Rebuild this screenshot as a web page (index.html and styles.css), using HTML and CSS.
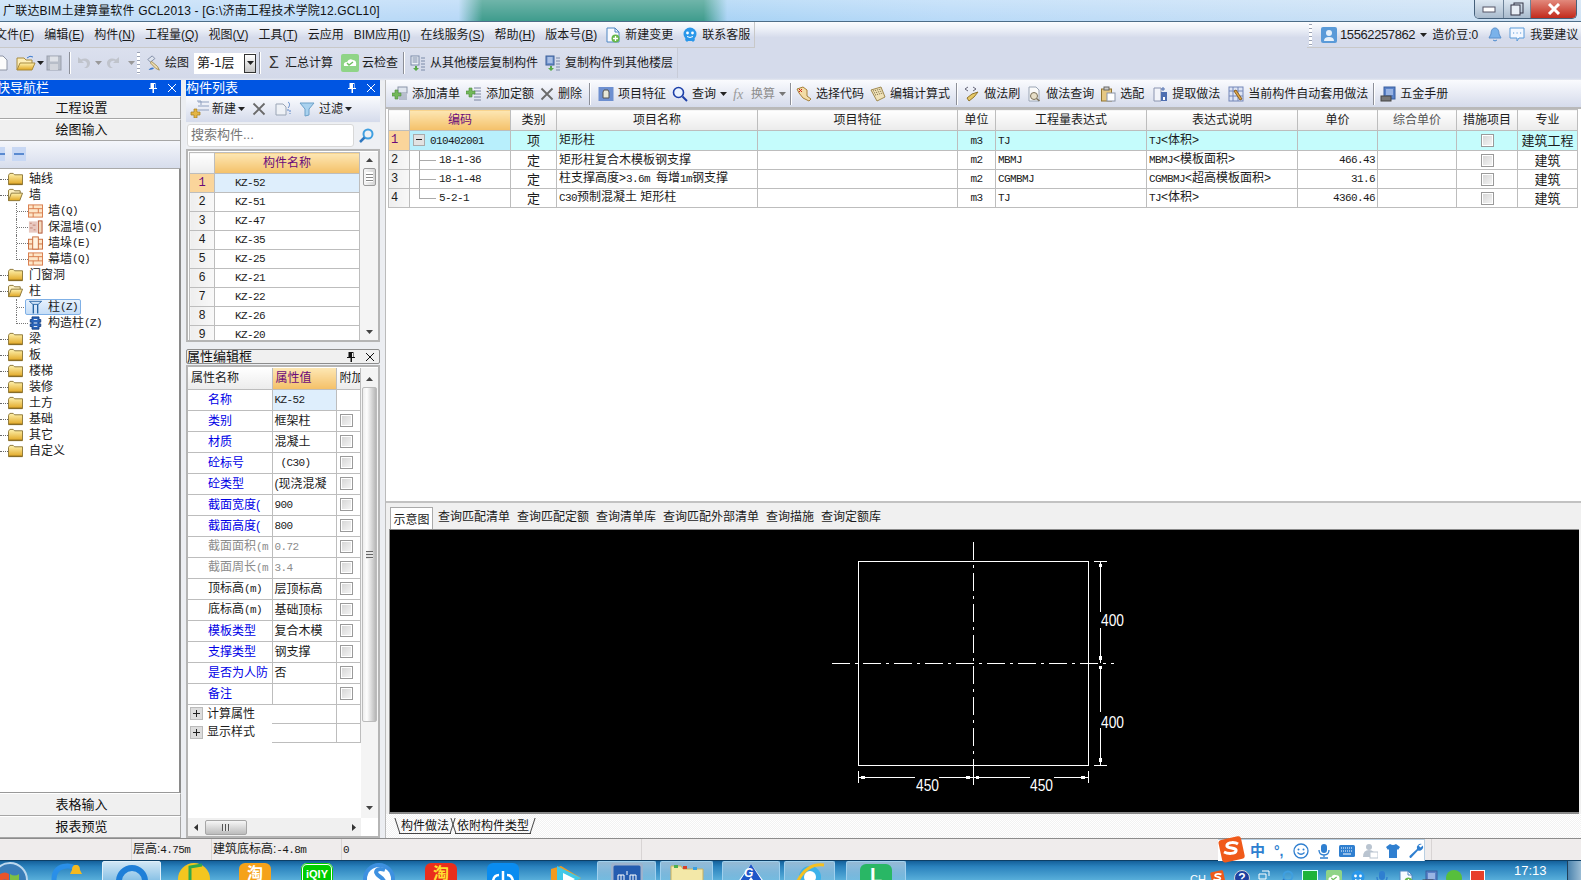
FILE: index.html
```html
<!DOCTYPE html>
<html lang="zh-CN">
<head>
<meta charset="utf-8">
<title>广联达BIM土建算量软件 GCL2013</title>
<link rel="stylesheet" href="styles.css">
</head>
<body>
<svg class="defs" aria-hidden="true">
  <defs>
    <linearGradient id="gf" x1="0" y1="0" x2="0" y2="1"><stop offset="0" stop-color="#fff3b0"/><stop offset="1" stop-color="#e0a520"/></linearGradient>
    <symbol id="folder" viewBox="0 0 16 14"><path d="M.5 3V13h15V2.500H7L5.500 1H2L.5 3z" fill="url(#gf)" stroke="#8b7434"/><path d="M1 12.500h14" stroke="#7d6220"/></symbol>
    <symbol id="folderopen" viewBox="0 0 16 14"><path d="M.5 13V2L2 1h3.500l1.500 1.500h6V5" fill="#fdf0c0" stroke="#8b7434"/><path d="M.5 13 3.500 5H15.500L12.500 13z" fill="url(#gf)" stroke="#8b7434"/></symbol>
    <symbol id="brick" viewBox="0 0 16 14"><rect x=".5" y=".5" width="15" height="13" fill="#fde6c8" stroke="#d87a4a"/><path d="M.5 4.500h15M.5 9h15M5.500.5v4M11 4.500V9M5.500 9v4.500" stroke="#d87a4a"/></symbol>
    <symbol id="insul" viewBox="0 0 16 14"><rect x="1" y="1" width="9" height="12" fill="#e8c8c0"/><path d="M2 3h2M5 5h3M2 8h3M6 10h2" stroke="#c08070"/><rect x="11" y=".5" width="4" height="13" fill="#f4dcc0" stroke="#b05030"/></symbol>
    <symbol id="pier" viewBox="0 0 16 14"><rect x=".5" y="3" width="15" height="10.500" fill="#fde6c8" stroke="#c86a3a"/><rect x="5" y=".5" width="6" height="13" fill="#fff3e0" stroke="#c86a3a"/><path d="M.5 8h4M11 8h4.500" stroke="#c86a3a"/></symbol>
    <symbol id="column" viewBox="0 0 16 16"><path d="M1 1.500h14L11 5H5z" fill="#cfe4f8" stroke="#1f5f9f"/><path d="M5.500 5v10.500M10.500 5v10.500" stroke="#1f5f9f" stroke-width="1.500"/></symbol>
    <symbol id="gzz" viewBox="0 0 16 16"><path d="M4 1h8v3h2v3h-2v2h2v3h-2v3H4v-3H2V9h2V7H2V4h2z" fill="#2a64b8" stroke="#123f80"/><path d="M6 4h4M6 8h4M6 12h4" stroke="#fff"/></symbol>
    <symbol id="pin" viewBox="0 0 10 12"><path d="M2.500 1h5v5h1.500v1H6v4H4.500V7H1V6h1.500zM6 2v4h1V2z" fill="currentColor"/></symbol>
    <symbol id="x" viewBox="0 0 12 12"><path d="M2 2l8 8M10 2l-8 8" stroke="currentColor" fill="none"/></symbol>
    <symbol id="bigx" viewBox="0 0 14 14"><path d="M1.500 1.500l11 11M12.500 1.500l-11 11" stroke="#6a6a6a" stroke-width="1.800" fill="none"/></symbol>
    <symbol id="addl" viewBox="0 0 16 16"><rect x="6" y="1" width="9" height="6" fill="#dfe5ee" stroke="#8a94a8"/><path d="M7 9h8M7 11h8M7 13h8" stroke="#8a94a8"/><path d="M3 4h3v3h3v3H6v3H3v-3H0V7h3z" fill="#72b85a" stroke="#4d8a3c" stroke-width=".6"/></symbol>
    <symbol id="addd" viewBox="0 0 16 16"><path d="M8 2h7M8 5h7M8 8h7M8 11h7M8 14h7" stroke="#7a84a0"/><path d="M3 2h3v3h3v3H6v3H3V8H0V5h3z" fill="#72b85a" stroke="#4d8a3c" stroke-width=".6"/></symbol>
    <symbol id="feat" viewBox="0 0 16 16"><rect x=".5" y="1" width="15" height="14" fill="#6d8fd0"/><path d="M6 4h4l1 2v6H5V6z" fill="#e8e8d8" stroke="#555"/></symbol>
    <symbol id="mag" viewBox="0 0 16 16"><circle cx="6.500" cy="6.500" r="5" fill="#eaf3ff" stroke="#1c3fa8" stroke-width="1.600"/><path d="M10.500 10.500 15 15" stroke="#1c3fa8" stroke-width="2"/></symbol>
    <symbol id="fx" viewBox="0 0 14 14"><text x="0" y="12" font-family="Liberation Serif" font-style="italic" font-size="14" fill="#9a9a9a">fx</text></symbol>
    <symbol id="code" viewBox="0 0 16 16"><path d="M1 3l6-2 4 3v6l4 3-2 2-6-3-4-5z" fill="#f3dca6" stroke="#a6803a"/><path d="M3 3l3 3M6 3 3 6" stroke="#d02020"/></symbol>
    <symbol id="edit" viewBox="0 0 16 16"><path d="M1 4l10-3 4 10-8 4z" fill="#efe1b8" stroke="#a08a50"/><path d="M3 5l8-2M4 7l8-2M5 9l8-2" stroke="#7a6a40" stroke-dasharray="1 1"/></symbol>
    <symbol id="brush" viewBox="0 0 16 16"><path d="M4 1 1 3l3 2M9 1l3 2-3 2" stroke="#667" fill="none"/><path d="M8 8l6-2-4 5-5 4-2-3z" fill="#e6c866" stroke="#91752d"/></symbol>
    <symbol id="query" viewBox="0 0 16 16"><path d="M3 1h7l3 3v11H3z" fill="#fafafa" stroke="#9aa5b5"/><circle cx="8" cy="10" r="3.500" fill="#e7dfc8" stroke="#7a705a"/><path d="M10.500 12.500l3 2.500" stroke="#7a705a" stroke-width="1.500"/></symbol>
    <symbol id="clip" viewBox="0 0 16 16"><rect x="1.500" y="3" width="10" height="12" fill="#e6c884" stroke="#917430"/><rect x="4" y="1" width="5" height="3" fill="#ccc" stroke="#666"/><rect x="7" y="7" width="8" height="8" fill="#fff" stroke="#8a94a8"/></symbol>
    <symbol id="take" viewBox="0 0 16 16"><path d="M2 2h7v13H2z" fill="#f2f4fa" stroke="#8a94b0"/><rect x="9" y="6" width="6" height="9" fill="#4e6eb0"/><rect x="11" y="11" width="2" height="3" fill="#fff"/><path d="M11 1v4M9 3h4" stroke="#4e6eb0"/></symbol>
    <symbol id="auto" viewBox="0 0 16 16"><rect x="1" y="1" width="14" height="14" fill="#dde4f4" stroke="#7386b8"/><path d="M1 5h14M1 10h14M5 1v14M10 1v14" stroke="#7386b8"/><path d="M6 5l6 9 2-1-6-9z" fill="#e2a848" stroke="#8a6020"/></symbol>
    <symbol id="hw" viewBox="0 0 16 16"><rect x="4" y="1" width="11" height="12" fill="#5a82c8" stroke="#395f9f"/><path d="M6 4h7M6 6h7M6 8h7" stroke="#d8e6ff"/><rect x="1" y="10" width="10" height="5" fill="#777" stroke="#444"/></symbol>
    <symbol id="doc" viewBox="0 0 14 16"><path d="M1 1h8l4 4v10H1z" fill="#f7faff" stroke="#4e86c2"/><path d="M9 1v4h4" fill="none" stroke="#4e86c2"/><circle cx="9.500" cy="11.500" r="4" fill="#66b84a"/><path d="M9.500 9v5M7 11.500h5" stroke="#fff" stroke-width="1.300"/></symbol>
    <symbol id="kf" viewBox="0 0 16 16"><circle cx="8" cy="7" r="6.500" fill="#2a97ea"/><path d="M3 13l1-2h8l1 2-2 2-1-1H6l-1 1z" fill="#2a97ea"/><circle cx="5.500" cy="6" r="1.400" fill="#fff"/><circle cx="10.500" cy="6" r="1.400" fill="#fff"/><path d="M5 9.500q3 2 6 0" stroke="#fff" fill="none"/></symbol>
    <symbol id="copy1" viewBox="0 0 16 16"><rect x="1" y="1" width="8" height="9" fill="#eef2f8" stroke="#7b8aa8"/><path d="M2.500 3h5M2.500 5h5M2.500 7h5" stroke="#7b8aa8"/><path d="M11 3h4M11 6h4M11 9h4M11 12h4M11 15h4" stroke="#7b8aa8"/><path d="M5 11h2v2h2l-3 3-3-3h2z" fill="#5aaa4a"/></symbol>
    <symbol id="copy2" viewBox="0 0 16 16"><rect x="1" y="1" width="8" height="9" fill="#6f92cc" stroke="#3c5f98"/><path d="M2.500 3h5M2.500 5h5M2.500 7h5" stroke="#e6eeff"/><path d="M11 3h4M11 6h4M11 9h4M11 12h4M11 15h4" stroke="#7b8aa8"/><path d="M5 11h2v2h2l-3 3-3-3h2z" fill="#5aaa4a"/></symbol>
    <symbol id="filter" viewBox="0 0 16 16"><path d="M1 2h14l-5 6v6l-4 1V8z" fill="#a9d2ef" stroke="#6ca0c8"/></symbol>
    <symbol id="newb" viewBox="0 0 20 18"><path d="M8 2h11M8 6h11M8 10h11" stroke="#8fa0bf"/><path d="M7 1h4v4" stroke="#8fa0bf" fill="none"/><path d="M4 9h3v3h3v3H7v3H4v-3H1v-3h3z" fill="#e4b544" stroke="#a37c1c" stroke-width=".7"/></symbol>
    <symbol id="dcopy" viewBox="0 0 16 16"><path d="M1 3h7l3 3v8H1z" fill="#eef1f6" stroke="#9aa5b5"/><path d="M13 1c2 1 2 4 0 6" stroke="#5a86c8" fill="none"/><path d="M12 9h3v4" stroke="#5a86c8" fill="none" stroke-dasharray="2 1"/></symbol>
    <symbol id="search" viewBox="0 0 16 16"><circle cx="10" cy="6" r="4.500" fill="none" stroke="#3f9fe0" stroke-width="2"/><path d="M6.500 9.500 2 14" stroke="#2f78c0" stroke-width="2.500"/></symbol>
    <symbol id="open" viewBox="0 0 20 16"><path d="M1 15V3h7l2 2h6v3" fill="#fdeeb8" stroke="#a88a3c"/><path d="M1 15 4 8h15l-3 7z" fill="url(#gf)" stroke="#a88a3c"/><path d="M11 3q3-3 6-1" stroke="#3a7ad0" fill="none"/></symbol>
    <symbol id="save" viewBox="0 0 16 16"><rect x="1" y="1" width="14" height="14" fill="#b7bdc8" stroke="#9aa0ad"/><rect x="4" y="1.500" width="8" height="5" fill="#dfe2e8"/><rect x="4" y="9" width="8" height="6" fill="#d2d5dc"/></symbol>
    <symbol id="undo" viewBox="0 0 14 14"><path d="M1 1v6h6L5 5c3-1 5 1 5 3s-1 3-3 4h3c2-1 3-3 3-5C13 3 8 1 4 3.500z" fill="#c0c4cc"/></symbol>
    <symbol id="redo" viewBox="0 0 14 14"><path d="M13 1v6H7l2-2C6 4 4 6 4 8s1 3 3 4H4c-2-1-3-3-3-5C1 3 6 1 10 3.500z" fill="#c0c4cc"/></symbol>
    <symbol id="draw" viewBox="0 0 16 18"><path d="M1 5l5-4 3 3-5 4z" fill="#dde3ee" stroke="#7a86a0"/><path d="M5 7l7 6 2 4-4-2-6-6z" fill="#f0e0b0" stroke="#a08a50"/><path d="M7 14c-3 0-4 1-5 3 3 0 5-1 6-2z" fill="#3f78c8"/></symbol>
    <symbol id="cloud" viewBox="0 0 18 18"><rect width="18" height="18" rx="2" fill="#8fd487"/><path d="M3 12q-1-4 3-4 2-4 6-2 4 0 3 6z" fill="#fff"/><path d="M6 9l2 2 4-3" stroke="#6fc060" fill="none" stroke-width="1.400"/></symbol>
    <symbol id="user" viewBox="0 0 16 16"><rect width="16" height="16" rx="2" fill="#5a9ad8"/><circle cx="8" cy="6" r="3" fill="#e6f0fa"/><path d="M3 14q0-4 5-4t5 4z" fill="#e6f0fa"/></symbol>
    <symbol id="bell" viewBox="0 0 16 16"><path d="M8 1c3 0 4 3 4 6l2 4H2l2-4c0-3 1-6 4-6z" fill="#7ab2ea" stroke="#5a90cc"/><path d="M6 13q2 2 4 0" fill="#7ab2ea" stroke="#5a90cc"/></symbol>
    <symbol id="bubble" viewBox="0 0 16 16"><path d="M1 1h14v10H10l-2 3v-3H1z" fill="#f4f8ff" stroke="#5a9ad8"/><path d="M4 6h1.200M7.500 6h1.200M11 6h1.200" stroke="#5a9ad8"/></symbol>
    <symbol id="sogou" viewBox="0 0 28 28"><rect x="2" y="2" width="23" height="23" rx="3" fill="#f05a1a" transform="rotate(-12 13 13)"/><path d="M20 8c-3-2-10-2-11 1-1 4 10 2 9 6-1 3-8 3-12 1" fill="none" stroke="#fff" stroke-width="3"/></symbol>
    <symbol id="smile" viewBox="0 0 16 16"><circle cx="8" cy="8" r="7" fill="none" stroke="#2f7fd0" stroke-width="1.300"/><circle cx="5.500" cy="6.500" r="1" fill="#2f7fd0"/><circle cx="10.500" cy="6.500" r="1" fill="#2f7fd0"/><path d="M4.500 9.500q3.500 3.500 7 0" fill="none" stroke="#2f7fd0" stroke-width="1.200"/></symbol>
    <symbol id="mic" viewBox="0 0 16 16"><rect x="5" y="1" width="6" height="9" rx="3" fill="#2f7fd0"/><path d="M3 7q0 5 5 5t5-5M8 12v2M4 15h8" stroke="#2f7fd0" fill="none" stroke-width="1.300"/></symbol>
    <symbol id="kbd" viewBox="0 0 16 16"><rect x="0" y="2" width="16" height="12" rx="1.500" fill="#2f7fd0"/><path d="M2 5h12M2 8h12" stroke="#fff" stroke-dasharray="1 1"/><path d="M4 11h8" stroke="#fff"/></symbol>
    <symbol id="person" viewBox="0 0 16 16"><circle cx="7" cy="4" r="3" fill="#b9c4d0"/><path d="M1 14q0-7 6-7t6 7z" fill="#b9c4d0"/><rect x="8" y="9" width="8" height="6" fill="#fff" stroke="#b9c4d0"/></symbol>
    <symbol id="shirt" viewBox="0 0 16 16"><path d="M5 1 1 4l2 3 1-1v9h8V6l1 1 2-3-4-3q-3 2-6 0z" fill="#2f7fd0"/></symbol>
    <symbol id="wrench" viewBox="0 0 16 16"><path d="M14 1a4 4 0 0 0-5 5L1.500 13A1.500 1.500 0 0 0 3 15l7-7.500a4 4 0 0 0 5-5l-2.500 2-2-2z" fill="#2f7fd0"/></symbol>
    <symbol id="arrd" viewBox="0 0 7 4"><path d="M0 0h7L3.500 4z" fill="currentColor"/></symbol>
    <symbol id="arru" viewBox="0 0 7 4"><path d="M0 4h7L3.500 0z" fill="currentColor"/></symbol>
    <symbol id="arrl" viewBox="0 0 4 7"><path d="M4 0v7L0 3.500z" fill="currentColor"/></symbol>
    <symbol id="arrr" viewBox="0 0 4 7"><path d="M0 0v7l4-3.500z" fill="currentColor"/></symbol>
  </defs>
</svg>

<header class="titlebar">
  <span class="title">广联达BIM土建算量软件 GCL2013 - [G:\济南工程技术学院12.GCL10]</span>
  <div class="winctl">
    <span class="wb"><svg width="14" height="10"><rect x="1" y="3" width="12" height="5" fill="#fff" stroke="#556"/></svg></span>
    <span class="wb wb-max"><svg width="14" height="14"><rect x="4" y="1" width="9" height="10" fill="none" stroke="#334"/><rect x="1" y="3" width="9" height="10" fill="#e8eef6" stroke="#334"/></svg></span>
    <span class="wb wb-close"><svg width="14" height="12"><path d="M2 1l10 10M12 1 2 11" stroke="#fff" stroke-width="3"/></svg></span>
  </div>
</header>

<nav class="menubar">
  <div class="menu">
    <span>文件(<u>F</u>)</span><span>编辑(<u>E</u>)</span><span>构件(<u>N</u>)</span><span>工程量(<u>Q</u>)</span><span>视图(<u>V</u>)</span><span>工具(<u>T</u>)</span><span>云应用</span><span>BIM应用(<u>I</u>)</span><span>在线服务(<u>S</u>)</span><span>帮助(<u>H</u>)</span><span>版本号(<u>B</u>)</span>
    <span class="it it-a"><svg class="i16"><use href="#doc"/></svg>新建变更</span>
    <span class="it it-b"><svg class="i16"><use href="#kf"/></svg>联系客服</span>
  </div>
  <div class="userbar">
    <span class="grip"></span>
    <svg class="i16"><use href="#user"/></svg>
    <span class="phone">15562257862</span>
    <svg class="tri"><use href="#arrd"/></svg>
    <span>造价豆:0</span>
    <svg class="i16 bell"><use href="#bell"/></svg>
    <svg class="i16"><use href="#bubble"/></svg>
    <span>我要建议</span>
  </div>
</nav>

<div class="toolbar">
  <div class="tools">
    <svg class="i16 cropdoc" viewBox="0 0 16 16"><path d="M1 1h10l4 4v10H1z" fill="#fbfbfb" stroke="#8d94a4"/></svg>
    <svg class="i20 ml8"><use href="#open"/></svg><svg class="tri ml1"><use href="#arrd"/></svg>
    <svg class="i16 ml2"><use href="#save"/></svg>
    <span class="vsep ml7"></span>
    <svg class="i14 ml6"><use href="#undo"/></svg><svg class="tri tri-off ml4"><use href="#arrd"/></svg>
    <svg class="i14 ml4"><use href="#redo"/></svg><svg class="tri tri-off ml8"><use href="#arrd"/></svg>
    <span class="grip ml2"></span>
    <svg class="i16 ml6"><use href="#draw"/></svg><span class="ml3">绘图</span>
    <span class="combo ml5"><span>第-1层</span><span class="combo-btn"><svg class="tri"><use href="#arrd"/></svg></span></span>
    <span class="vsep ml3"></span>
    <span class="sigma ml7">Σ</span><span class="ml5">汇总计算</span>
    <svg class="i18 ml8"><use href="#cloud"/></svg><span class="ml3">云检查</span>
    <span class="vsep ml5"></span>
    <svg class="i16 ml5"><use href="#copy1"/></svg><span class="ml4">从其他楼层复制构件</span>
    <svg class="i16 ml7"><use href="#copy2"/></svg><span class="ml4">复制构件到其他楼层</span>
  </div>
</div>

<main class="workspace">
  <aside class="nav">
    <div class="phead phead-blue nav-head"><span>快导航栏</span><svg class="pin"><use href="#pin"/></svg><svg class="px"><use href="#x"/></svg></div>
    <button class="navbtn">工程设置</button>
    <button class="navbtn navbtn-b">绘图输入</button>
    <div class="treetools"><span class="tt-btn tt-cut"></span><span class="tt-btn"></span></div>
    <div class="tree">
      <div class="n"><i class="dot"></i><svg class="fi"><use href="#folder"/></svg>轴线</div>
      <div class="n"><i class="dot dot-open"></i><svg class="fi"><use href="#folderopen"/></svg>墙</div>
      <div class="n c"><i class="ln"></i><svg class="fi"><use href="#brick"/></svg>墙<span class="m">(Q)</span></div>
      <div class="n c"><i class="ln"></i><svg class="fi"><use href="#insul"/></svg>保温墙<span class="m">(Q)</span></div>
      <div class="n c"><i class="ln"></i><svg class="fi"><use href="#pier"/></svg>墙垛<span class="m">(E)</span></div>
      <div class="n c"><i class="ln ln-end"></i><svg class="fi"><use href="#brick"/></svg>幕墙<span class="m">(Q)</span></div>
      <div class="n"><i class="dot"></i><svg class="fi"><use href="#folder"/></svg>门窗洞</div>
      <div class="n"><i class="dot dot-open"></i><svg class="fi"><use href="#folderopen"/></svg>柱</div>
      <div class="n c"><i class="ln"></i><span class="sel"><svg class="fi"><use href="#column"/></svg>柱<span class="m">(Z)</span></span></div>
      <div class="n c"><i class="ln ln-end"></i><svg class="fi"><use href="#gzz"/></svg>构造柱<span class="m">(Z)</span></div>
      <div class="n"><i class="dot"></i><svg class="fi"><use href="#folder"/></svg>梁</div>
      <div class="n"><i class="dot"></i><svg class="fi"><use href="#folder"/></svg>板</div>
      <div class="n"><i class="dot"></i><svg class="fi"><use href="#folder"/></svg>楼梯</div>
      <div class="n"><i class="dot"></i><svg class="fi"><use href="#folder"/></svg>装修</div>
      <div class="n"><i class="dot"></i><svg class="fi"><use href="#folder"/></svg>土方</div>
      <div class="n"><i class="dot"></i><svg class="fi"><use href="#folder"/></svg>基础</div>
      <div class="n"><i class="dot"></i><svg class="fi"><use href="#folder"/></svg>其它</div>
      <div class="n"><i class="dot"></i><svg class="fi"><use href="#folder"/></svg>自定义</div>
    </div>
    <button class="navbtn">表格输入</button>
    <button class="navbtn navbtn-b">报表预览</button>
  </aside>

  <section class="mid">
    <div class="phead phead-blue"><span>构件列表</span><svg class="pin"><use href="#pin"/></svg><svg class="px"><use href="#x"/></svg></div>
    <div class="midtools">
      <svg class="i20"><use href="#newb"/></svg><span>新建</span><svg class="tri"><use href="#arrd"/></svg>
      <svg class="i14 gapx"><use href="#bigx"/></svg>
      <svg class="i16 gap6"><use href="#dcopy"/></svg>
      <svg class="i16 gap4"><use href="#filter"/></svg><span class="ml2">过滤</span><svg class="tri"><use href="#arrd"/></svg>
    </div>
    <div class="searchrow"><span class="searchbox">搜索构件...</span><svg class="i16 searchi"><use href="#search"/></svg></div>
    <div class="listframe">
      <table class="gl">
        <colgroup><col class="c-rn"><col class="c-nm"></colgroup>
        <tr class="hd"><th class="rn"></th><th class="act">构件名称</th></tr>
        <tr class="cur"><td class="rn act">1</td><td class="name">KZ-52</td></tr>
        <tr><td class="rn">2</td><td class="name">KZ-51</td></tr>
        <tr><td class="rn">3</td><td class="name">KZ-47</td></tr>
        <tr><td class="rn">4</td><td class="name">KZ-35</td></tr>
        <tr><td class="rn">5</td><td class="name">KZ-25</td></tr>
        <tr><td class="rn">6</td><td class="name">KZ-21</td></tr>
        <tr><td class="rn">7</td><td class="name">KZ-22</td></tr>
        <tr><td class="rn">8</td><td class="name">KZ-26</td></tr>
        <tr><td class="rn">9</td><td class="name">KZ-20</td></tr>
      </table>
      <div class="vsb"><svg class="ar"><use href="#arru"/></svg><span class="vthumb-s"></span><span class="sp"></span><svg class="ar"><use href="#arrd"/></svg></div>
    </div>
    <div class="phead phead-gray"><span>属性编辑框</span><svg class="pin"><use href="#pin"/></svg><svg class="px"><use href="#x"/></svg></div>
    <div class="propframe">
      <div class="propmain">
        <table class="pt">
          <colgroup><col class="p1"><col class="p2"><col class="p3"></colgroup>
          <tr class="phd"><th class="l">属性名称</th><th class="act l">属性值</th><th class="l clipc">附加</th></tr>
          <tr><td class="lb bl">名称</td><td class="cur-v"><span class="m">KZ-52</span></td><td></td></tr>
          <tr><td class="lb bl">类别</td><td>框架柱</td><td><i class="cb"></i></td></tr>
          <tr><td class="lb bl">材质</td><td>混凝土</td><td><i class="cb"></i></td></tr>
          <tr><td class="lb bl">砼标号</td><td><span class="m">&nbsp;(C30)</span></td><td><i class="cb"></i></td></tr>
          <tr><td class="lb bl">砼类型</td><td>(现浇混凝</td><td><i class="cb"></i></td></tr>
          <tr><td class="lb bl">截面宽度(</td><td><span class="m">900</span></td><td><i class="cb"></i></td></tr>
          <tr><td class="lb bl">截面高度(</td><td><span class="m">800</span></td><td><i class="cb"></i></td></tr>
          <tr><td class="lb gr">截面面积<span class="m">(m</span></td><td class="gr"><span class="m">0.72</span></td><td><i class="cb"></i></td></tr>
          <tr><td class="lb gr">截面周长<span class="m">(m</span></td><td class="gr"><span class="m">3.4</span></td><td><i class="cb"></i></td></tr>
          <tr><td class="lb">顶标高<span class="m">(m)</span></td><td>层顶标高</td><td><i class="cb"></i></td></tr>
          <tr><td class="lb">底标高<span class="m">(m)</span></td><td>基础顶标</td><td><i class="cb"></i></td></tr>
          <tr><td class="lb bl">模板类型</td><td>复合木模</td><td><i class="cb"></i></td></tr>
          <tr><td class="lb bl">支撑类型</td><td>钢支撑</td><td><i class="cb"></i></td></tr>
          <tr><td class="lb bl">是否为人防</td><td>否</td><td><i class="cb"></i></td></tr>
          <tr><td class="lb bl">备注</td><td></td><td><i class="cb"></i></td></tr>
          <tr class="grp"><td class="lb-g"><i class="plus"></i>计算属性</td><td></td><td></td></tr>
          <tr class="grp"><td class="lb-g"><i class="plus"></i>显示样式</td><td></td><td></td></tr>
        </table>
        <div class="vsb vsb-p"><svg class="ar"><use href="#arru"/></svg><span class="vthumb-l"><span class="grips"></span></span><span class="sp"></span><svg class="ar"><use href="#arrd"/></svg></div>
      </div>
      <div class="hsb"><svg class="ah"><use href="#arrl"/></svg><span class="hthumb"><span class="gripsh"></span></span><span class="sp"></span><svg class="ah"><use href="#arrr"/></svg></div>
    </div>
  </section>

  <section class="right">
    <div class="rtools">
      <span class="it"><svg class="i16"><use href="#addl"/></svg>添加清单</span>
      <span class="it"><svg class="i16"><use href="#addd"/></svg>添加定额</span>
      <span class="it"><svg class="i14"><use href="#bigx"/></svg>删除</span>
      <span class="vsep"></span>
      <span class="it"><svg class="i16"><use href="#feat"/></svg>项目特征</span>
      <span class="it"><svg class="i16"><use href="#mag"/></svg>查询<svg class="tri"><use href="#arrd"/></svg></span>
      <span class="it it-off"><svg class="i14"><use href="#fx"/></svg>换算<svg class="tri"><use href="#arrd"/></svg></span>
      <span class="vsep vs-b"></span>
      <span class="it"><svg class="i16"><use href="#code"/></svg>选择代码</span>
      <span class="it"><svg class="i16"><use href="#edit"/></svg>编辑计算式</span>
      <span class="vsep vs-c"></span>
      <span class="it"><svg class="i16"><use href="#brush"/></svg>做法刷</span>
      <span class="it"><svg class="i16"><use href="#query"/></svg>做法查询</span>
      <span class="it"><svg class="i16"><use href="#clip"/></svg>选配</span>
      <span class="it ml2"><svg class="i16"><use href="#take"/></svg>提取做法</span>
      <span class="it ml2"><svg class="i16"><use href="#auto"/></svg>当前构件自动套用做法</span>
      <span class="vsep vs-d"></span>
      <span class="it"><svg class="i16"><use href="#hw"/></svg>五金手册</span>
    </div>
    <div class="grid-area">
      <table class="mt">
        <colgroup><col class="m0"><col class="m1"><col class="m2"><col class="m3"><col class="m4"><col class="m5"><col class="m6"><col class="m7"><col class="m8"><col class="m9"><col class="m10"><col class="m11"></colgroup>
        <tr class="hd"><th class="rn"></th><th class="act">编码</th><th>类别</th><th>项目名称</th><th>项目特征</th><th>单位</th><th>工程量表达式</th><th>表达式说明</th><th>单价</th><th class="dim">综合单价</th><th>措施项目</th><th>专业</th></tr>
        <tr class="r1"><td class="rn act">1</td><td class="code0"><i class="minus"></i><span class="m">010402001</span></td><td class="ct big">项</td><td>矩形柱</td><td></td><td class="ct"><span class="m">m3</span></td><td><span class="m">TJ</span></td><td><span class="m">TJ</span>&lt;体积&gt;</td><td></td><td></td><td class="ct"><i class="cb"></i></td><td class="ct big">建筑工程</td></tr>
        <tr><td class="rn">2</td><td class="code tm"><span class="m">18-1-36</span></td><td class="ct big">定</td><td>矩形柱复合木模板钢支撑</td><td></td><td class="ct"><span class="m">m2</span></td><td><span class="m">MBMJ</span></td><td><span class="m">MBMJ</span>&lt;模板面积&gt;</td><td class="rt"><span class="m">466.43</span></td><td></td><td class="ct"><i class="cb"></i></td><td class="ct big">建筑</td></tr>
        <tr><td class="rn">3</td><td class="code tm"><span class="m">18-1-48</span></td><td class="ct big">定</td><td>柱支撑高度&gt;<span class="m">3.6m </span>每增<span class="m">1m</span>钢支撑</td><td></td><td class="ct"><span class="m">m2</span></td><td><span class="m">CGMBMJ</span></td><td><span class="m">CGMBMJ</span>&lt;超高模板面积&gt;</td><td class="rt"><span class="m">31.6</span></td><td></td><td class="ct"><i class="cb"></i></td><td class="ct big">建筑</td></tr>
        <tr><td class="rn">4</td><td class="code tl"><span class="m">5-2-1</span></td><td class="ct big">定</td><td><span class="m">C30</span>预制混凝土 矩形柱</td><td></td><td class="ct"><span class="m">m3</span></td><td><span class="m">TJ</span></td><td><span class="m">TJ</span>&lt;体积&gt;</td><td class="rt"><span class="m">4360.46</span></td><td></td><td class="ct"><i class="cb"></i></td><td class="ct big">建筑</td></tr>
      </table>
    </div>
    <div class="dtabs"><span class="dtab on">示意图</span><span class="dtab">查询匹配清单</span><span class="dtab">查询匹配定额</span><span class="dtab">查询清单库</span><span class="dtab">查询匹配外部清单</span><span class="dtab">查询描施</span><span class="dtab">查询定额库</span></div>
    <div class="canvas">
      <svg class="draw" width="1186" height="283" viewBox="390 530 1186 283">
        <g fill="none" stroke="#fff">
          <rect x="858.500" y="561.500" width="230" height="204"/>
          <path d="M973.500 542V790" stroke-dasharray="18 5 3 5"/>
          <path d="M832 663.500H1114" stroke-dasharray="18 5 3 5"/>
          <path d="M1094 561.500h13M1094 765.500h13M1100.500 562V612M1100.500 628V663M1100.500 667V712M1100.500 728V765"/>
          <path d="M858.500 771v12M1088.500 771v12M858 777.500H915M939 777.500H973M973 777.500H1030M1054 777.500H1088M973.500 771v12"/>
        </g>
        <g fill="#fff">
          <rect x="1099" y="564" width="3" height="3"/><rect x="1099" y="656" width="3" height="4"/><rect x="1099" y="666" width="3" height="3"/><rect x="1099" y="758" width="3" height="4"/>
          <rect x="861" y="776" width="4" height="3"/><rect x="966" y="776" width="4" height="3"/><rect x="976" y="776" width="3" height="3"/><rect x="1081" y="776" width="4" height="3"/>
        </g>
        <g class="dimt">
          <text x="1101" y="626" textLength="23" lengthAdjust="spacingAndGlyphs">400</text><text x="1101" y="728" textLength="23" lengthAdjust="spacingAndGlyphs">400</text><text x="916" y="791" textLength="23" lengthAdjust="spacingAndGlyphs">450</text><text x="1030" y="791" textLength="23" lengthAdjust="spacingAndGlyphs">450</text>
        </g>
      </svg>
    </div>
    <div class="btabs"><span class="btab">构件做法</span><span class="btab">依附构件类型</span></div>
  </section>
</main>

<footer class="status">
  <span class="st st1"></span>
  <span class="st st2">层高:<span class="m">4.75m</span></span>
  <span class="st st3">建筑底标高:<span class="m">-4.8m</span></span>
  <span class="st st4"><span class="m">0</span></span>
  <span class="st st5"></span>
  <span class="st st6"></span>
  <div class="sogou">
    <svg class="sg-logo"><use href="#sogou"/></svg>
    <span class="zh">中</span>
    <span class="pt2">°,</span>
    <svg class="i16"><use href="#smile"/></svg>
    <svg class="i16"><use href="#mic"/></svg>
    <svg class="i16"><use href="#kbd"/></svg>
    <svg class="i16"><use href="#person"/></svg>
    <svg class="i16"><use href="#shirt"/></svg>
    <svg class="i16"><use href="#wrench"/></svg>
  </div>
</footer>

<div class="taskbar">
  <span class="slot s-start"><svg width="36" height="36" viewBox="0 0 36 36"><circle cx="14" cy="18" r="17" fill="#3a7db8" stroke="#bcd8ee" stroke-width="2"/><path d="M4 12q5-3 9 0v7q-4-3-9 0z" fill="#e8542a"/><path d="M14 12q5 3 9 0v7q-4 3-9 0z" fill="#7cc043"/></svg></span>
  <span class="slot s-g"><svg width="40" height="32" viewBox="0 0 40 32"><path d="M28 6c-4-5-22-5-22 10s16 16 22 10" fill="none" stroke="#2a8fe8" stroke-width="5"/><path d="M28 2c3 0 4 2 4 5l2 4H22l2-4c0-3 1-5 4-5z" fill="#f5b91f"/></svg></span>
  <span class="slot s-act"><svg width="34" height="34" viewBox="0 0 34 34"><circle cx="17" cy="17" r="13" fill="none" stroke="#1e7fd8" stroke-width="6"/></svg></span>
  <span class="slot s-q"><svg width="32" height="32" viewBox="0 0 32 32"><circle cx="16" cy="16" r="16" fill="#f3c61f"/><path d="M12 18V4l12-2" fill="none" stroke="#2ea84f" stroke-width="3"/></svg></span>
  <span class="slot"><span class="app-sq app-or">淘</span></span>
  <span class="slot"><span class="app-sq app-gr">iQIY</span></span>
  <span class="slot"><svg width="32" height="32" viewBox="0 0 32 32"><circle cx="16" cy="16" r="16" fill="#3d90e0"/><circle cx="16" cy="16" r="12" fill="#fff"/><path d="M22 7c-8-3-12 2-6 6s8 8 0 11" fill="none" stroke="#3d90e0" stroke-width="4"/></svg></span>
  <span class="slot"><span class="app-sq app-rd">淘</span></span>
  <span class="slot"><svg width="32" height="32" viewBox="0 0 32 32"><rect width="32" height="32" rx="6" fill="#0a8cf0"/><path d="M6 18q1-6 6-6M26 18q-1-6-6-6M16 8v18" fill="none" stroke="#fff" stroke-width="2.500"/></svg></span>
  <span class="slot"><svg width="32" height="32" viewBox="0 0 32 32"><path d="M2 6l10-3 20 12-20 16H2z" fill="#f39a1f"/><path d="M8 3l24 12-24 16z" fill="#41c8e8"/><path d="M14 10l12 6-12 8z" fill="#fff"/></svg></span>
  <span class="btnb btn-b"><svg width="32" height="26" viewBox="0 0 32 26"><rect x="1" y="1" width="30" height="30" rx="3" fill="#245cb0" stroke="#9db2cc" stroke-width="3"/><path d="M7 12h6v8H7zM19 12h6v8h-6zM10 12v8M22 12v8M16 8v4" fill="none" stroke="#fff"/></svg></span>
  <span class="btnb btn-f"><svg width="34" height="24" viewBox="0 0 34 24"><path d="M1 24V3l10 0 2 3h20v18z" fill="#f3e8a8" stroke="#c9b060"/><rect x="4" y="2" width="4" height="3" fill="#4cb050"/><rect x="13" y="3" width="4" height="3" fill="#d8402a"/><rect x="23" y="4" width="4" height="3" fill="#3aa0e0"/></svg></span>
  <span class="btnb btn-g"><svg width="34" height="24" viewBox="0 0 34 24"><path d="M17 1 34 24H0z" fill="#fff"/><path d="M17 1 2 24h8l7-10 7 10h8z" fill="#1e56c8"/><text x="10" y="14" class="gtext">G</text></svg></span>
  <span class="btnb btn-e"><svg width="32" height="26" viewBox="0 0 32 26"><circle cx="16" cy="14" r="11" fill="#3db2ea"/><circle cx="16" cy="14" r="6" fill="#fff"/><path d="M3 20Q12 0 30 2" fill="none" stroke="#f5c022" stroke-width="3"/></svg></span>
  <span class="btnb btn-l"><span class="app-sq app-lg">L</span></span>
  <span class="sp"></span>
  <div class="tray">
    <span class="ch">CH</span>
    <svg class="i16"><use href="#sogou"/></svg>
    <span class="help">?</span>
    <svg class="tr-w" viewBox="0 0 12 10"><path d="M1 4h7v5H1zM4 1h7v5" fill="none" stroke="#fff"/></svg>
    <svg class="i16"><use href="#search"/></svg>
    <span class="tr-g"></span>
    <svg class="i16"><use href="#cloud"/></svg>
    <svg class="i16"><use href="#kf"/></svg>
    <svg class="i16"><use href="#mic"/></svg>
    <svg class="i16"><use href="#doc"/></svg>
    <svg class="i16"><use href="#hw"/></svg>
    <span class="tr-gr"></span>
    <span class="tr-rd"></span>
    <span class="clock">17:13</span>
    <span class="showdesk"></span>
  </div>
</div>
</body>
</html>
```

FILE: styles.css
```css
*{box-sizing:border-box}
html,body{margin:0;padding:0}
body{width:1581px;height:880px;overflow:hidden;display:grid;grid-template-rows:22px 26px 30px 760px 22px 20px;font:12px/16px "Liberation Sans","Noto Sans CJK SC",sans-serif;color:#1b1b1b;background:#d5dbeb}
.defs{position:absolute;width:0;height:0}
svg{display:block;flex:none}
.m{font-family:"Liberation Mono","Noto Sans CJK SC",monospace;font-size:11px;letter-spacing:-.6px}
.i14{width:14px;height:14px}.i16{width:16px;height:16px}.i18{width:18px;height:18px}.i20{width:20px;height:18px}
.tri{width:7px;height:4px;color:#222}
.tri-off{color:#999}
.sp{flex:1}
.ml1{margin-left:1px}.ml2{margin-left:2px}.ml3{margin-left:3px}.ml4{margin-left:4px}.ml5{margin-left:5px}.ml6{margin-left:6px}.ml7{margin-left:7px}.ml8{margin-left:8px}

/* title */
.titlebar{display:flex;align-items:center;height:22px;border-bottom:1px solid #4d6d88;background:linear-gradient(rgba(255,255,255,.25),rgba(255,255,255,0)),linear-gradient(90deg,#c5dff7 0,#b7d8f7 29%,#3f9c8d 30.500%,#3f9c8d 44.500%,#a9d3f5 46%,#b9daf8 60%,#cfe2f4 100%)}
.title{margin-left:3px;font-size:12px;letter-spacing:.2px;color:#111;line-height:20px;white-space:nowrap}
.winctl{margin-left:auto;margin-right:4px;align-self:flex-start;display:flex;height:19px;border:1px solid #45607a;border-top:0;border-radius:0 0 5px 5px;overflow:hidden}
.wb{width:29px;display:flex;align-items:center;justify-content:center;background:linear-gradient(#dde8f2,#a9bbcd);border-right:1px solid #6d8298}
.wb-max{width:27px}
.wb-close{width:45px;border:0;background:linear-gradient(#e2897c,#c22a1c)}

/* menu */
.menubar{display:flex;justify-content:space-between;height:26px;background:linear-gradient(#fbfcfe 0,#eef1f8 25%,#d5dbeb 60%)}
.menu{display:flex;align-items:center;gap:10px;margin-left:-5px;padding:1px 6px 0 0;border-right:1px solid #c8c8c8;border-bottom:1px solid #c8c8c8;white-space:nowrap;width:760px}
.menu u{text-underline-offset:1px}
.it{display:inline-flex;align-items:center;gap:4px;white-space:nowrap}
.it-a{margin-left:-2px}
.it-b{margin-left:-1px}
.userbar{display:flex;align-items:center;gap:5px;width:274px;padding:1px 0 0 2px;white-space:nowrap;border-bottom:1px solid #c8c8c8}
.phone{font-size:13px;margin-left:-2px;letter-spacing:-.4px}
.grip{width:3px;height:22px;background:repeating-linear-gradient(#9aa2b4 0 1px,#fff 1px 4px);flex:none}
.userbar .grip{margin-right:4px}
.bell{margin:0 1px 0 4px}

/* toolbar */
.toolbar{height:30px;background:#d5dbeb}
.tools{display:flex;align-items:center;width:678px;height:30px;border-right:1px solid #c8ccd8;background:linear-gradient(#dbe0ee,#d3d9e9);white-space:nowrap}
.cropdoc{margin-left:-8px}
.vsep{width:2px;height:22px;background:#8c8f98;border-right:1px solid #fff;flex:none}
.combo{display:flex;align-items:center;justify-content:space-between;width:62px;height:21px;background:#fff;padding:0 0 0 3px;font-size:13px}
.combo-btn{display:flex;align-items:center;justify-content:center;width:12px;height:19px;background:linear-gradient(#fff,#c4c4c4);border:1px solid #333}
.sigma{width:12px;font-size:16px;text-align:center;color:#333}

/* workspace */
.workspace{display:grid;grid-template-columns:181px 194px 1fr;column-gap:5px;height:760px;padding-top:2px;background:linear-gradient(#d5dbeb 0,#eceef2 3px)}
.phead{display:flex;align-items:center;height:16px;line-height:16px;font-size:13px}
.phead>span{flex:1;white-space:nowrap}
.pin{width:10px;height:12px;margin-right:8px}
.px{width:12px;height:12px;margin-right:3px}
.phead-blue{background:#0055e2;color:#fff}
.phead-gray{background:#f0f0f0;color:#111;border:1px solid #8d8d8d;border-radius:2px;margin-top:7px;height:15px}
.nav-head>span{margin-left:-3px}

/* nav */
.nav{display:flex;flex-direction:column;height:758px}
.navbtn{display:block;height:23px;padding:0 17px 0 0;border:1px solid #a6a6a6;border-top-color:#fff;border-left:0;background:#f0f0f0;font:inherit;font-size:13px;color:#111;width:181px;text-align:center;line-height:20px}
.navbtn-b{height:22px}
.treetools{display:flex;gap:7px;height:27px;padding:6px 0 0;background:linear-gradient(#f4f6fb,#d7ddec);border-right:1px solid #a6a6a6}
.tt-btn{width:14px;height:14px;background:linear-gradient(#5a8ad0,#5a8ad0) center/10px 2px no-repeat,#c8d8f4}
.tt-cut{width:5px}
.tree{flex:1;background:#fff;border-right:2px solid #8a8a8a;border-top:1px solid #aaa;border-bottom:1px solid #999;padding-top:2px;font-size:12px;overflow:hidden}
.n{display:flex;align-items:center;height:16px;white-space:nowrap}
.fi{width:15px;height:14px;margin-right:6px}
.c .fi{margin-right:5px}
.dot{width:8px;height:1px;border-top:1px dotted #666;flex:none}
.c{padding-left:16px}
.ln{width:12px;height:16px;flex:none;border-left:1px dotted #777;background:linear-gradient(90deg,#777 50%,transparent 50%) 0 8px/2px 1px repeat-x}
.ln-end{height:9px;align-self:flex-start}
.sel{display:flex;align-items:center;height:16px;background:linear-gradient(#e6f1fd,#c6def7);border:1px solid #7fb0e6;border-radius:2px;margin-left:-3px;padding:0 2px;line-height:14px}

/* mid */
.mid{display:flex;flex-direction:column;height:758px;width:194px}
.midtools{display:flex;align-items:center;gap:2px;height:26px;padding-left:4px;background:linear-gradient(#fafbfe,#d5dbeb);font-size:12px}
.gapx{margin-left:5px}
.gap6{margin-left:7px}
.gap4{margin-left:6px}
.searchrow{display:flex;align-items:center;justify-content:space-between;height:25px;margin-top:1px;background:#eef0f4;padding-right:6px}
.searchbox{width:167px;height:23px;background:#fff;border:1px solid #d8d8d8;border-radius:3px;color:#777;padding-left:3px;line-height:20px;margin-left:1px;font-size:13px}
.listframe{display:flex;height:193px;margin-top:1px;border:2px solid #b5b5b5;background:#fff;overflow:hidden;padding:1px 0 0 1px}
table{border-collapse:collapse;table-layout:fixed;border-spacing:0}
.gl{width:170px;height:0;flex:none}
.c-rn{width:25px}.c-nm{width:145px}
.gl tr{height:19px}
.gl tr.hd{height:21px}
.gl td,.gl th,.mt td,.mt th,.pt td,.pt th{border:1px solid #bdbdbd;padding:0;overflow:hidden;white-space:nowrap;font-weight:400}
.hd th{background:linear-gradient(#fff,#ebebeb);text-align:center;font-size:12px}
.hd th.rn{background:linear-gradient(#fff,#ececec)}
th.act{background:linear-gradient(#fde7b4,#f4c068)!important;color:#6a0a7a}
.rn{background:linear-gradient(90deg,#eee,#f8f8f8);text-align:center;font-family:"Liberation Mono",monospace;font-size:12px}
td.rn.act{background:#fad59b;color:#6a0a7a}
.name{font-family:"Liberation Mono",monospace;font-size:11px;letter-spacing:-.6px;padding-left:20px!important}
.cur .name{background:#deeefc}
.vsb{width:17px;display:flex;flex-direction:column;align-items:center;background:#f4f4f4;padding:6px 0;flex:1;color:#444}
.ar{width:7px;height:4px}
.vthumb-s{width:13px;height:18px;margin-top:6px;border:1px solid #9a9a9a;border-radius:2px;background:repeating-linear-gradient(#fff 0 2px,#888 2px 3px) center/7px 10px no-repeat,linear-gradient(90deg,#f8f8f8,#d4d4d4)}
.propframe{flex:1;display:flex;flex-direction:column;margin-top:1px;border:2px solid #b5b5b5;background:#fff;overflow:hidden;padding:1px 0 0 0}
.propmain{flex:1;display:flex;min-height:0}
.pt{width:172px;height:0;flex:none}
.p1{width:84px}.p2{width:64px}.p3{width:24px}
.pt tr{height:21px}
.pt tr.grp{height:19px}
.pt td,.pt th{border-left:0;border-top:0}
.pt td{padding:0 0 0 2px;font-size:12px}
.pt .cb{margin:0 0 0 1px}
.phd th{background:linear-gradient(#fff,#ececec);text-align:left;font-size:12px}
.phd th.l{padding-left:3px}
.lb{padding-left:20px!important}
.bl{color:#0000e6}
.gr,.gr .m{color:#8c8c8c}
.cur-v{background:#deeefc}
.lb-g{display:flex;align-items:center;height:18px;padding-left:2px!important;border:0!important}
.plus{width:13px;height:13px;margin-right:4px;background:linear-gradient(#222,#222) center/7px 1px no-repeat,linear-gradient(#222,#222) center/1px 7px no-repeat,#ddd;border:1px solid #bbb;flex:none}
.cb{display:block;width:13px;height:13px;margin:0 auto;border:1px solid #9a9a9a;background:linear-gradient(135deg,#d4d4d4,#f6f6f6);box-shadow:inset 0 0 0 1px #fff}
.vsb-p{padding:0;height:100%}
.vsb-p .ar:first-child{margin:9px 0 6px}
.vsb-p .ar:last-child{margin-bottom:8px}
.vthumb-l{display:flex;align-items:center;justify-content:center;width:15px;height:335px;border-radius:2px;background:linear-gradient(90deg,#eee,#fdfdfd 30%,#b5b5b5);border:1px solid #bbb}
.grips{width:7px;height:8px;background:repeating-linear-gradient(#666 0 1px,#e4e4e4 1px 3px)}
.hsb{display:flex;align-items:center;height:18px;padding:0 5px 0 6px;margin-right:17px;background:#f0f0f0;color:#333;flex:none}
.ah{width:4px;height:7px}
.hthumb{display:flex;align-items:center;justify-content:center;width:42px;height:15px;margin-left:7px;border:1px solid #a6a6a6;border-radius:2px;background:linear-gradient(#f6f6f6,#bcbcbc)}
.gripsh{width:8px;height:7px;background:repeating-linear-gradient(90deg,#555 0 1px,#e4e4e4 1px 3px)}

/* right */
.right{display:flex;flex-direction:column;height:758px;min-width:0;border-left:1px solid #bbb;background:#f0f0f0}
.rtools{display:flex;align-items:center;gap:6px;height:27px;padding-left:6px;background:linear-gradient(#fafbfe,#d5dbeb);white-space:nowrap}
.rtools .vsep{margin:0 1px}
.rtools .vs-b{margin:0 -2px}
.rtools .vs-c{margin:0}
.rtools .vs-d{margin:0 -1px}
.it-off{color:#8d8d8d}
.it-off .tri{color:#777}
.grid-area{height:396px;border-top:2px solid #b9b9b9;border-bottom:2px solid #c2c2c2;background:#fff;padding:0 0 0 2px;overflow:hidden}
.mt{width:1189px}
.m0{width:21px}.m1{width:101px}.m2{width:46px}.m3{width:201px}.m4{width:200px}.m5{width:38px}.m6{width:151px}.m7{width:151px}.m8{width:80px}.m9{width:79px}.m10{width:61px}.m11{width:60px}
.mt tr{height:19px}
.mt tr.hd{height:21px}
.mt tr.r1{height:20px}
.mt td{padding:0 0 0 2px;line-height:15px}
.mt td.rn{padding:0;text-align:left;padding-left:2px}
.ct{text-align:center;padding:0!important}
.rt{text-align:right;padding:0 2px 0 0!important}
.big{font-size:13px}
.r1 td{background:#c5fcfc}
.r1 td.code0{background:#b8effc}
.r1 td.rn{background:#fad59b}
.dim{color:#555}
.code0{padding-left:3px!important}
.minus{display:inline-block;vertical-align:-2px;width:12px;height:12px;margin-right:5px;background:linear-gradient(#222,#222) center/6px 1px no-repeat,#e2e2e2;border:1px solid #aaa}
.code{padding-left:29px!important}
.tm{background:linear-gradient(#aaa,#aaa) 9px 0/1px 100% no-repeat,linear-gradient(#aaa,#aaa) 9px 50%/17px 1px no-repeat}
.tl{background:linear-gradient(#aaa,#aaa) 9px 0/1px 50% no-repeat,linear-gradient(#aaa,#aaa) 9px 50%/17px 1px no-repeat}
.dtabs{display:flex;align-items:flex-end;gap:7px;height:26px;padding-left:4px;background:#f0f0f0;white-space:nowrap}
.dtab{height:22px;line-height:20px}
.dtab.on{width:43px;background:#fff;border:1px solid #aaa;border-bottom:0;text-align:center;margin-right:-2px;line-height:24px}
.canvas{height:285px;margin:0 2px 0 3px;background:#000;border:1px solid #8a8a8a;border-width:1px 0 2px 1px;overflow:hidden}
.dimt text{fill:#fff;font-size:16px;font-family:"Liberation Sans",sans-serif}
.btabs{flex:1;display:flex;gap:4px;padding:4px 0 0 13px;background:repeating-conic-gradient(#f2f2f2 0 25%,#fff 0 50%) 0 0/2px 2px}
.btab{height:16px;line-height:16px;padding:0 2px;border-bottom:1px solid #444;position:relative;font-size:12px;color:#111}
.btab::before,.btab::after{content:"";position:absolute;top:0;bottom:-1px;width:1px;background:#444}
.btab::before{left:-2px;transform:skewX(18deg)}
.btab::after{right:-2px;transform:skewX(-18deg)}

/* status */
.status{display:flex;position:relative;height:22px;background:#efecec;border-top:1px solid #8c8c8c;align-items:stretch;line-height:21px}
.st{border-right:1px solid #d8d4d4;padding-left:1px;white-space:nowrap}
.st1{width:132px}.st2{width:80px}.st3{width:130px}.st4{width:300px}.st5{width:790px}.st6{flex:1;border:0}
.sogou{position:absolute;left:1218px;top:0;width:207px;height:22px;display:flex;align-items:center;gap:7px;padding-left:32px;background:#fff;border-top:1px solid #b9cfe2;border-right:1px solid #b9cfe2}
.sg-logo{position:absolute;left:0;top:-4px;width:28px;height:28px}
.zh{font-size:15px;font-weight:700;color:#2f7fd0;line-height:20px;margin-right:2px}
.pt2{font-size:14px;font-weight:700;color:#2f7fd0;width:13px;line-height:16px}

/* taskbar */
.taskbar{display:flex;align-items:flex-start;height:20px;overflow:hidden;background:linear-gradient(#14609a,#2a82bd 30%,#58aeda);border-top:1px solid #0d3f66;color:#fff}
.slot{width:62px;display:flex;justify-content:center;flex:none;padding-top:2px}
.s-start{width:30px;justify-content:flex-start;margin-left:-4px;padding-top:1px}
.s-g{width:76px;padding-left:8px}
.s-act{width:59px;height:20px;background:linear-gradient(#d0e6f5,#8ac2e6);border:1px solid #dff0fb;border-radius:2px 2px 0 0}
.s-q{width:63px;padding-left:3px}
.app-sq{display:flex;justify-content:center;width:32px;height:32px;border-radius:6px;font-weight:700;line-height:22px;font-size:16px}
.app-or{background:#f5a21a;color:#fff}
.app-gr{background:#00cc00;color:#fff;font-size:11px;line-height:18px;border:2px solid #fff;outline:1px solid #00cc00;outline-offset:-1px}
.app-rd{background:#ea2e1c;color:#ffdf30}
.app-lg{background:#29b765;color:#fff;font-size:20px;margin:1px auto 0}
.btnb{display:flex;justify-content:center;flex:none;height:20px;padding-top:1px;background:linear-gradient(rgba(255,255,255,.55),rgba(255,255,255,.15));border:1px solid #9fd0ee;border-bottom:0;border-radius:2px 2px 0 0}
.btn-b{width:59px;margin-left:1px}
.btn-f{width:53px;margin-left:4px}
.btn-g{width:58px;margin-left:9px}
.btn-e{width:51px;margin-left:4px}
.btn-l{width:60px;margin-left:11px}
.gtext{fill:#fff;font:italic 700 12px "Liberation Sans",sans-serif}
.tray{display:flex;align-items:flex-start;gap:8px;width:392px;height:20px;padding:9px 0 0 1px;font-size:12px;flex:none;overflow:hidden}
.ch{width:12px;line-height:18px;font-size:11px}
.help{width:16px;height:16px;border-radius:50%;background:#1d3fa0;border:1px solid #d6d6d6;font-weight:700;text-align:center;line-height:14px}
.tr-w{width:12px;height:10px}
.tr-g{width:16px;height:14px;background:#1fb33a;border:1px solid #dff}
.tr-gr{width:16px;height:16px;border-radius:50%;background:#57bf3c}
.tr-rd{width:15px;height:16px;background:#e8402a;border:1px solid #fff}
.clock{margin-left:21px;font-size:13px;line-height:14px;margin-top:-6px;width:36px}
.showdesk{width:14px;height:20px;margin:-9px 0 0 auto;background:linear-gradient(90deg,#4c84ae,#9abcd4);border-left:1px solid #203f58}
```
